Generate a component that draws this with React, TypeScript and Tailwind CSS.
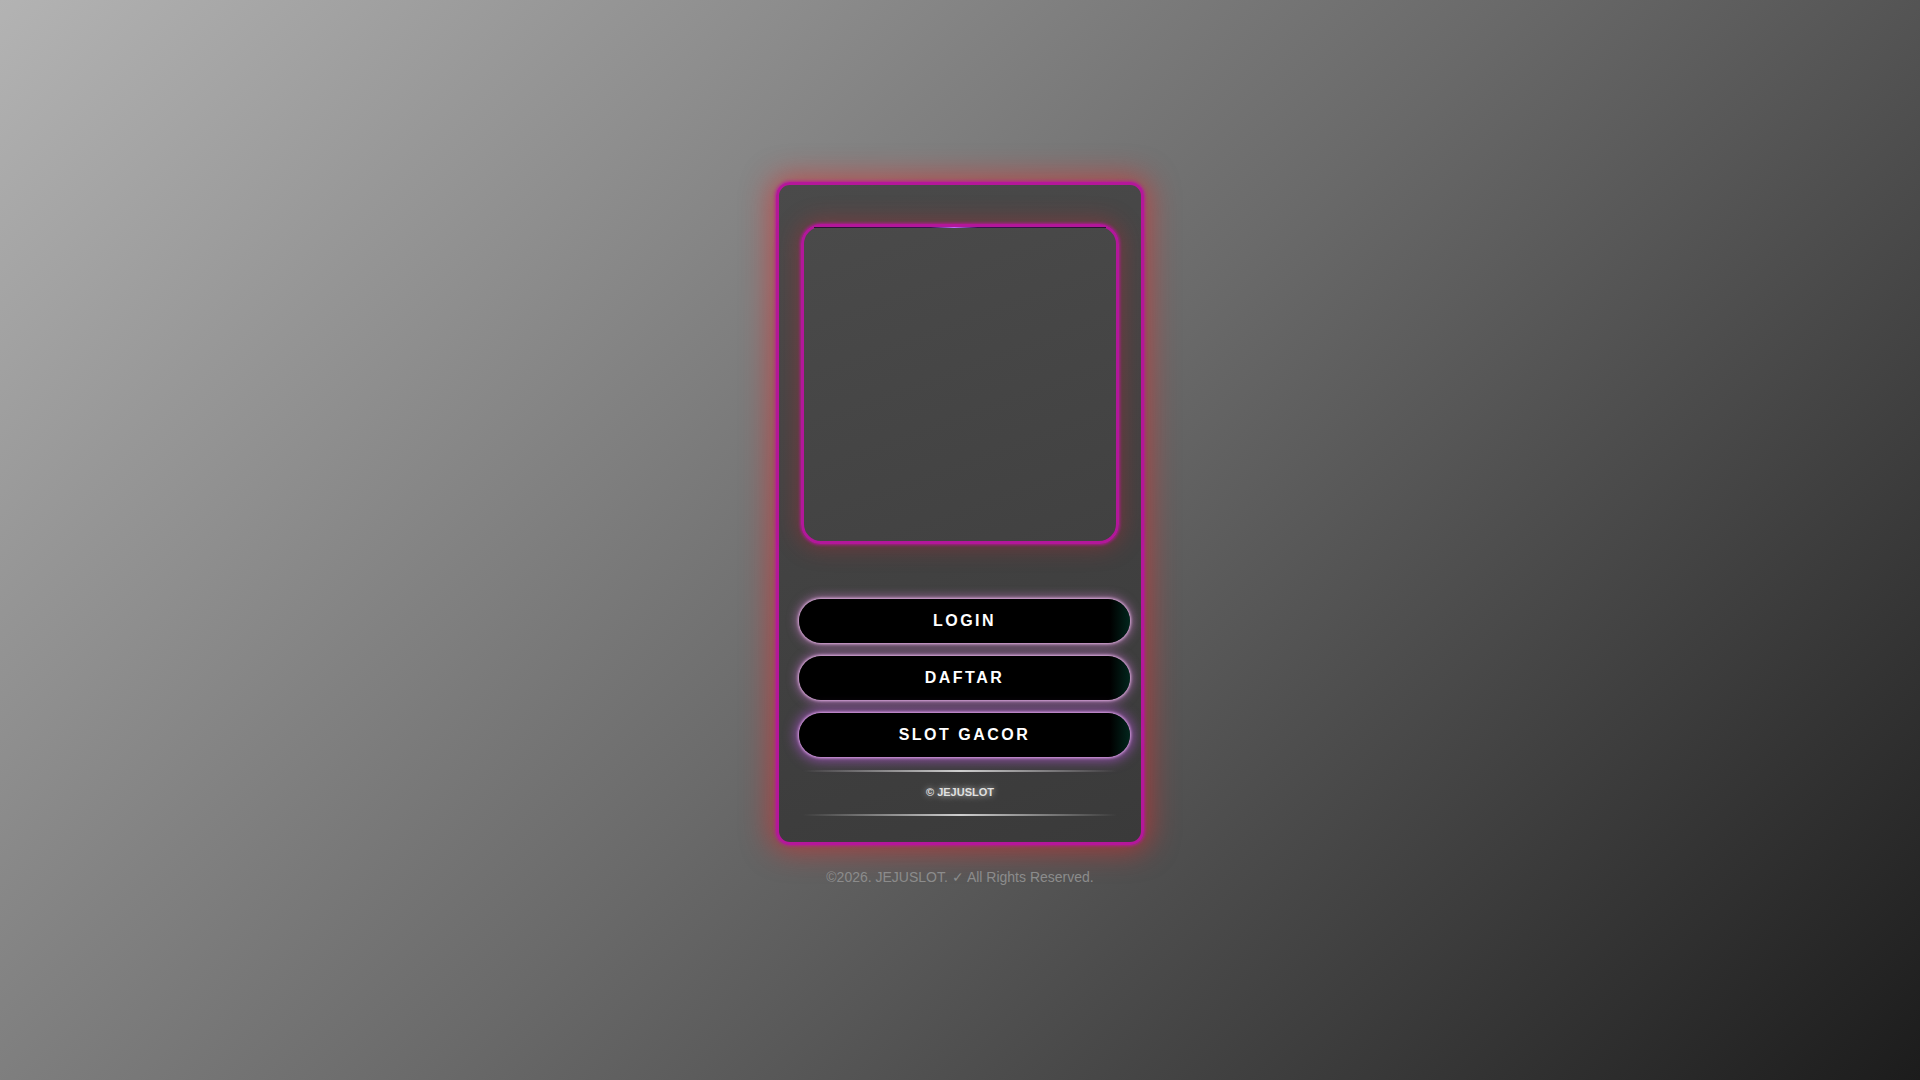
export default function App() {
  const buttons = [
    { label: "LOGIN", glow: "shadow-[0_0_3px_1px_rgba(240,190,240,0.9),0_0_10px_3px_rgba(200,120,200,0.55)]" },
    { label: "DAFTAR", glow: "shadow-[0_0_3px_1px_rgba(240,190,240,0.9),0_0_10px_3px_rgba(190,110,200,0.6)]" },
    { label: "SLOT GACOR", glow: "shadow-[0_0_3px_1px_rgba(230,170,240,0.95),0_0_12px_4px_rgba(160,80,190,0.75)]" },
  ];

  return (
    <div
      className="min-h-screen w-full flex flex-col items-center pt-[182px] bg-[linear-gradient(135deg,#b3b3b3_0%,#6a6a6a_50%,#1c1c1c_100%)]"
      style={{ fontFamily: '"Liberation Sans", Arial, sans-serif' }}
    >
      <div className="w-[368px] rounded-[14px] border-[3px] border-[#b5179a] bg-[linear-gradient(160deg,#4a4a4a_0%,#3a3a3a_100%)] shadow-[0_0_3px_1px_rgba(190,20,160,0.8),0_0_28px_6px_rgba(230,40,40,0.55)] px-[22px] pt-[39px] pb-[26px] flex flex-col">
        <div className="h-[320px] rounded-[20px] border-[3px] border-[#b3179a] shadow-[0_0_3px_1px_rgba(190,20,160,0.8),0_0_22px_4px_rgba(200,40,50,0.35)] bg-[linear-gradient(160deg,#4a4a4a_0%,#414141_100%)] flex flex-col">
          <div className="mx-[10px] h-px bg-[linear-gradient(90deg,#2a1030_0%,#3a1050_40%,#c070ff_48%,#3a1050_56%,#2a1030_100%)]" />
        </div>

        <div className="mt-[55px] ml-[-2px] w-[331px] flex flex-col gap-[13px]">
          {buttons.map((b) => (
            <button
              key={b.label}
              className={`h-[44px] w-full rounded-full bg-[linear-gradient(90deg,#000_0%,#000_94%,#02261d_100%)] text-white text-[16px] font-bold tracking-[2.5px] ${b.glow}`}
            >
              {b.label}
            </button>
          ))}
        </div>

        <div className="mt-[13px] mx-[2px] h-[2px] bg-[linear-gradient(90deg,transparent_0%,#cfcfcf_50%,transparent_100%)]" />
        <p className="mt-[12px] text-center text-[11px] font-bold text-[#e0e0e0] [text-shadow:0_0_6px_rgba(255,255,255,0.7)]">
          © JEJUSLOT
        </p>
        <div className="mt-[13px] mx-[2px] h-[2px] bg-[linear-gradient(90deg,transparent_0%,#cfcfcf_50%,transparent_100%)]" />
      </div>

      <p className="mt-[22px] text-[14px] text-[#8c8c8c]">©2026. JEJUSLOT. ✓ All Rights Reserved.</p>
    </div>
  );
}
